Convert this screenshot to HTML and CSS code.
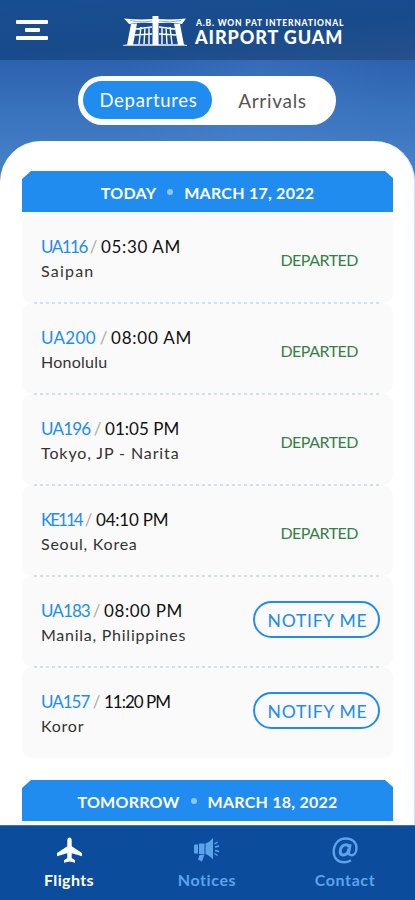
FILE: index.html
```html
<!DOCTYPE html>
<html lang="en">
<head>
<meta charset="utf-8">
<meta name="viewport" content="width=device-width, initial-scale=1">
<title>Airport Guam</title>
<link rel="stylesheet" href="styles.css">
</head>
<body>
<div class="app">
  <header class="topbar">
    <div class="menu"><i></i><i class="short"></i><i></i></div>
    <div class="brand">
      <svg class="logo" width="66" height="32" viewBox="0 0 66 32" fill="#fff">
        <path d="M1 3.500Q17 5 30 4V1.500H35V4Q48 5 63 3.500L59 9Q48 7 36 8H29Q17 7 6 9Z"/>
        <path d="M8 9L14 8.500L10 30H4ZM57 9L51 8.500L55 30H61ZM29.500 1H35.500V30H29.500Z"/>
        <path d="M0 30Q5 28.500 11 29H54Q60 28.500 64 30V31H0Z" opacity=".7"/>
        <path d="M18 12L16 29M22 12L21 29M26 12V29M39 12V29M43 12L44 29M47 12L49 29M13 14L29 12M36 12L52 14M12 20L29 19M36 19L53 20" fill="none" stroke="#fff" stroke-width="1.400"/>
        <path d="M7 5.500Q20 8 29 6M36 6Q47 8 58 5.500" fill="none" stroke="#577fb3" stroke-width=".7"/>
      </svg>
      <div class="name"><span class="line1">A.B. WON PAT INTERNATIONAL</span><span class="line2">AIRPORT GUAM</span></div>
    </div>
  </header>
  <div class="hero">
    <div class="toggle"><span class="tab on">Departures</span><span class="tab">Arrivals</span></div>
  </div>
  <main class="sheet">
    <h2 class="day today"><span>TODAY</span><i></i><span>MARCH 17, 2022</span></h2>
    <section class="list">
      <article class="row"><div class="info"><div class="flight"><b class="c1">UA116</b><em>/</em><span class="t1">05:30 AM</span></div><div class="city p1">Saipan</div></div><span class="status">DEPARTED</span></article>
      <article class="row"><div class="info"><div class="flight"><b class="c2">UA200</b><em>/</em><span class="t2">08:00 AM</span></div><div class="city p2">Honolulu</div></div><span class="status">DEPARTED</span></article>
      <article class="row"><div class="info"><div class="flight"><b class="c3">UA196</b><em>/</em><span class="t3">01:05 PM</span></div><div class="city p3">Tokyo, JP - Narita</div></div><span class="status">DEPARTED</span></article>
      <article class="row"><div class="info"><div class="flight"><b class="c4">KE114</b><em>/</em><span class="t4">04:10 PM</span></div><div class="city p4">Seoul, Korea</div></div><span class="status">DEPARTED</span></article>
      <article class="row"><div class="info"><div class="flight"><b class="c5">UA183</b><em>/</em><span class="t5">08:00 PM</span></div><div class="city p5">Manila, Philippines</div></div><span class="notify">NOTIFY ME</span></article>
      <article class="row"><div class="info"><div class="flight"><b class="c6">UA157</b><em>/</em><span class="t6">11:20 PM</span></div><div class="city p6">Koror</div></div><span class="notify">NOTIFY ME</span></article>
    </section>
    <h2 class="day tomorrow"><span>TOMORROW</span><i></i><span>MARCH 18, 2022</span></h2>
  </main>
  <nav class="nav">
    <div class="item active">
      <svg width="28" height="28" viewBox="0 0 28 28"><path fill="currentColor" d="M14.500 1.500C13.100 1.500 12.300 2.800 12.300 4.300V10.200L2 17V20.200L12.300 17.200V22L9 24.300V26.700L14.500 25.500L20 26.700V24.300L16.700 22V17.200L27 20.200V17L16.700 10.200V4.300C16.700 2.800 15.900 1.500 14.500 1.500Z"/></svg>
      <span class="n1">Flights</span>
    </div>
    <div class="item">
      <svg width="28" height="28" viewBox="0 0 28 28"><path fill="currentColor" d="M1 10Q1 8.500 2 8.500H5V17.500H2Q1 17.500 1 16ZM6 7.500H11.500V18H6ZM12.500 7.500Q16 6.500 20 2V23.500Q16 19 12.500 18ZM6.500 19L11.500 18.500L9 25.500L5 23.500Z"/><path d="M21.500 8L24.500 6M22 11L26 10M22 14.500L26 15.500M21.500 17.500L24.500 19.500" stroke="currentColor" stroke-width="1.500" fill="none"/></svg>
      <span class="n2">Notices</span>
    </div>
    <div class="item">
      <svg width="28" height="28" viewBox="0 0 28 28" fill="none" stroke="currentColor"><path stroke-width="2.400" d="M20 24.200C17.800 25.600 15.600 26.300 13 26.300C6.800 26.300 2.700 22 2.700 15.800C2.700 8 7.700 2.500 14.800 2.500C21.300 2.500 25.500 6.300 25.500 12C25.500 16.300 23.300 19.300 20.300 19.300C18.300 19.300 17.600 18 18 16L19.500 8.300"/><path stroke-width="3" d="M18.300 11.500C17.800 9.500 16.500 8.800 15 8.800C11.500 8.800 9.200 12 9.200 15.300C9.200 17.600 10.400 19 12.300 19C15.200 19 17.200 16.600 18 12.500"/></svg>
      <span class="n3">Contact</span>
    </div>
  </nav>
</div>
</body>
</html>
```
FILE: styles.css
```css
* { box-sizing: border-box; }
body { margin: 0; font-family: Lato, "Liberation Sans", sans-serif; }
i, em, b { font-style: normal; font-weight: 400; }
.app {
  width: 415px; height: 900px; overflow: hidden;
  display: flex; flex-direction: column;
  background:
    linear-gradient(100deg, transparent 30%, rgba(80,140,215,.25) 60%, transparent 90%) 0 60px / 415px 120px no-repeat,
    linear-gradient(#2c61ae 60px, #3972bd 110px, #457fc6 160px);
}
.topbar {
  height: 60px; flex: none; display: flex;
  padding: 15px 0 0 16px;
  background: linear-gradient(175deg, #174e92, #184b8c 55%, #25518b);
}
.menu { width: 32px; height: 20px; margin-top: 5px; display: flex; flex-direction: column; justify-content: space-between; align-items: center; }
.menu i { width: 32px; height: 4px; border-radius: 1px; background: #fff; }
.menu .short { width: 15px; }
.brand { display: flex; margin-left: 75px; }
.logo { display: block; }
.name { margin: 4px 0 0 6px; display: flex; flex-direction: column; color: #fff; white-space: nowrap; font-family: Lato, sans-serif; font-weight: 900; }
.line1 { font-size: 8.5px; line-height: 9px; letter-spacing: .8px; margin-left: 1px; }
.line2 { font-size: 18px; line-height: 19px; letter-spacing: .9px; }
.hero { height: 81px; flex: none; padding: 16px 0 0 78px; }
.toggle { width: 258px; height: 49px; padding: 5px; border-radius: 25px; background: #fff; display: flex; }
.tab { flex: 1; line-height: 39px; text-align: center; font-size: 19px; letter-spacing: .7px; color: #555; padding-left: 2px; }
.tab.on { flex: none; width: 129px; height: 38px; border-radius: 19px; color: #fff; background: #208cf0; font-size: 18.5px; }
.sheet { flex: 1; min-height: 0; background: #fff; border-radius: 41px 41px 0 0; padding: 30px 22px 0; overflow: hidden; box-shadow: inset -1px 0 #d6e2f8; }
.day {
  margin: 0; height: 41px; width: 371px; display: flex; align-items: center; justify-content: center; gap: 11px;
  background: #208cf0; color: #fff; font-size: 16px; font-weight: 700; letter-spacing: .25px; padding-top: 1px;
  clip-path: polygon(9px 0, calc(100% - 8px) 0, 100% 7px, 100% 100%, 0 100%, 0 8px);
}
.day i { width: 6px; height: 6px; border-radius: 50%; background: #8dc8fb; }
.tomorrow { margin-top: 22px; }
.row { height: 91px; border-radius: 10px; background: #fafafa; display: flex; justify-content: space-between; padding: 0 13px 0 19px; position: relative; }
.row + .row::before { content: ""; position: absolute; left: 12px; right: 13px; top: -1px; height: 2px; background: repeating-linear-gradient(90deg, #d3e0e7 0 3px, transparent 3px 6px); }
.info { padding-top: 23px; white-space: nowrap; }
.flight { display: flex; height: 23px; line-height: 23px; font-size: 17px; color: #111; }
.flight b { color: #208cf0; flex: none; }
.flight em { width: 15px; text-align: center; color: #aaa; flex: none; }
.c1 { width: 45px; letter-spacing: -1.5px; }
.c2 { width: 55px; letter-spacing: .3px; }
.c3 { width: 49px; letter-spacing: -.8px; }
.c4 { width: 40px; letter-spacing: -2px; }
.c5 { width: 48px; letter-spacing: -.9px; }
.c6 { width: 48px; letter-spacing: -1px; }
.t1 { letter-spacing: .65px; }
.t2 { letter-spacing: .8px; }
.t3 { letter-spacing: .05px; }
.t4 { letter-spacing: -.2px; }
.t5 { letter-spacing: .6px; }
.t6 { letter-spacing: -1px; }
.city { font-size: 16px; line-height: 26px; letter-spacing: .75px; color: #333; }
.p1 { letter-spacing: 1.2px; }
.p2 { letter-spacing: .25px; }
.p3 { letter-spacing: .9px; }
.status { margin: 37px 22px 0 0; line-height: 22px; font-size: 16px; letter-spacing: -.5px; color: #358044; }
.notify { width: 127px; height: 37px; margin-top: 25px; border: 2px solid #208cf0; border-radius: 19px; text-align: center; line-height: 35px; font-size: 17.5px; letter-spacing: .75px; padding-left: 2px; color: #208cf0; white-space: nowrap; }
.nav { height: 75px; flex: none; display: flex; background: #0b4c9c; border-top: 1px solid #3f6fb4; }
.item { width: 138px; display: flex; flex-direction: column; align-items: center; padding-top: 10px; color: #5da3ec; font-size: 16px; font-weight: 700; letter-spacing: .6px; }
.item span { line-height: 20px; margin-top: 6px; }
.item svg { display: block; }
.active { color: #fff; }
.n1 { letter-spacing: .4px; }
```
